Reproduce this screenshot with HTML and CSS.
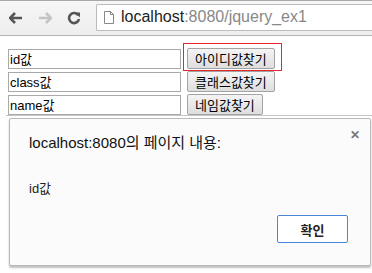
FILE: index.html
```html
<!DOCTYPE html>
<html lang="ko">
<head>
  <meta charset="UTF-8">
  <title>jquery_ex1</title>
  <link rel="stylesheet" href="styles.css">
</head>
<body>
  <div class="toolbar">
    <span class="nav-btn">
      <svg width="14" height="12" viewBox="0 0 14 12"><path d="M6 1 L1 6 L6 11 M1 6 H13" fill="none" stroke="#555" stroke-width="2.6"/></svg>
    </span>
    <span class="nav-btn">
      <svg width="14" height="12" viewBox="0 0 14 12"><path d="M8 1 L13 6 L8 11 M13 6 H1" fill="none" stroke="#c4c4c4" stroke-width="2.6"/></svg>
    </span>
    <span class="nav-btn">
      <svg width="14" height="14" viewBox="0 0 14 14"><path d="M11.2 4.2 A5 5 0 1 0 12 8" fill="none" stroke="#555" stroke-width="2.6"/><path d="M8 1.5 L13 1.5 L13 6.5 Z" fill="#555"/></svg>
    </span>
    <div class="omnibox">
      <svg class="page-icon" width="10" height="13" viewBox="0 0 10 13"><path d="M0.5 0.5 H6.5 L9.5 3.5 V12.5 H0.5 Z M6.5 0.5 V3.5 H9.5" fill="#fff" stroke="#888"/></svg>
      <span class="host">localhost</span><span class="path">:8080/jquery_ex1</span>
    </div>
  </div>

  <div class="page">
    <div class="row">
      <input type="text" value="id값">
      <span class="mark"><button>아이디값찾기</button></span>
    </div>
    <div class="row">
      <input type="text" value="class값">
      <button>클래스값찾기</button>
    </div>
    <div class="row">
      <input type="text" value="name값">
      <button>네임값찾기</button>
    </div>
  </div>

  <div class="overlay">
    <div class="dialog">
      <span class="close">&#x2715;</span>
      <div class="dialog-title">localhost:8080의 페이지 내용:</div>
      <div class="dialog-msg">id값</div>
      <div class="dialog-actions">
        <button class="ok">확인</button>
      </div>
    </div>
  </div>
</body>
</html>
```

FILE: styles.css
```css
body {
  margin: 0;
  background: #fff;
  font-family: "Liberation Sans", "Noto Sans CJK KR", sans-serif;
  color: #000;
  position: relative;
  height: 273px;
  overflow: hidden;
}
.toolbar {
  height: 36px;
  border-top: 1px solid #a8a8a8;
  border-bottom: 1px solid #b4b4b4;
  background: linear-gradient(#f6f6f6, #eeeeee);
  display: flex;
  align-items: center;
  padding-left: 9px;
  box-sizing: border-box;
}
.nav-btn {
  width: 29px;
  display: flex;
  align-items: center;
}
.omnibox {
  flex: 1;
  height: 27px;
  margin-top: -2px;
  background: #fff;
  border: 1px solid #bcbcbc;
  border-right: none;
  border-radius: 2px 0 0 2px;
  display: flex;
  align-items: center;
  padding-left: 7px;
  font-size: 16px;
  box-sizing: border-box;
}
.page-icon {
  margin-right: 7px;
}
.host {
  color: #222;
}
.path {
  color: #888;
}
.page {
  padding: 11px 8px 0;
}
.row {
  display: flex;
  align-items: center;
  gap: 6px;
  height: 23px;
}
.row input {
  width: 173px;
  height: 20px;
  box-sizing: border-box;
  border: 1px solid #a9a9a9;
  padding: 0 1px;
  font-family: inherit;
  font-size: 13px;
  margin: 0;
}
.row button {
  height: 21px;
  padding: 0 7px;
  border: 1px solid #a3a3a3;
  border-radius: 2px;
  background: linear-gradient(#f4f4f4, #dedede);
  font-family: "Noto Sans CJK KR", sans-serif;
  font-size: 13px;
  line-height: 19px;
  margin: 0;
  color: #000;
}
.mark {
  position: relative;
  display: flex;
}
.mark::after {
  content: "";
  position: absolute;
  left: -4px;
  top: -5px;
  right: -7px;
  bottom: -2px;
  border: 1px solid #e8262b;
}
.overlay {
  position: absolute;
  top: 115px;
  left: 6px;
  right: 0;
  border-top: 1px solid #c6c6c6;
  padding: 2px 1px 0 3px;
}
.dialog {
  position: relative;
  height: 148px;
  box-sizing: border-box;
  background: #fbfbfb;
  border: 1px solid #b9b9b9;
  border-radius: 2px;
  box-shadow: 0 2px 2px rgba(0, 0, 0, 0.25);
  padding: 14px 20px 0 19px;
}
.close {
  position: absolute;
  right: 10px;
  top: 9px;
  font-size: 12px;
  font-weight: bold;
  color: #777;
}
.dialog-title {
  font-size: 15px;
  color: #111;
  line-height: 20px;
}
.dialog-msg {
  margin-top: 25px;
  font-size: 13px;
  color: #222;
}
.dialog-actions {
  display: flex;
  justify-content: flex-end;
  margin-top: 18px;
}
.ok {
  width: 71px;
  height: 28px;
  background: #fff;
  border: 1px solid #4a86d9;
  border-radius: 2px;
  font-family: "Noto Sans CJK KR", sans-serif;
  font-size: 13px;
  font-weight: bold;
  color: #222;
  margin-right: 2px;
}
```
